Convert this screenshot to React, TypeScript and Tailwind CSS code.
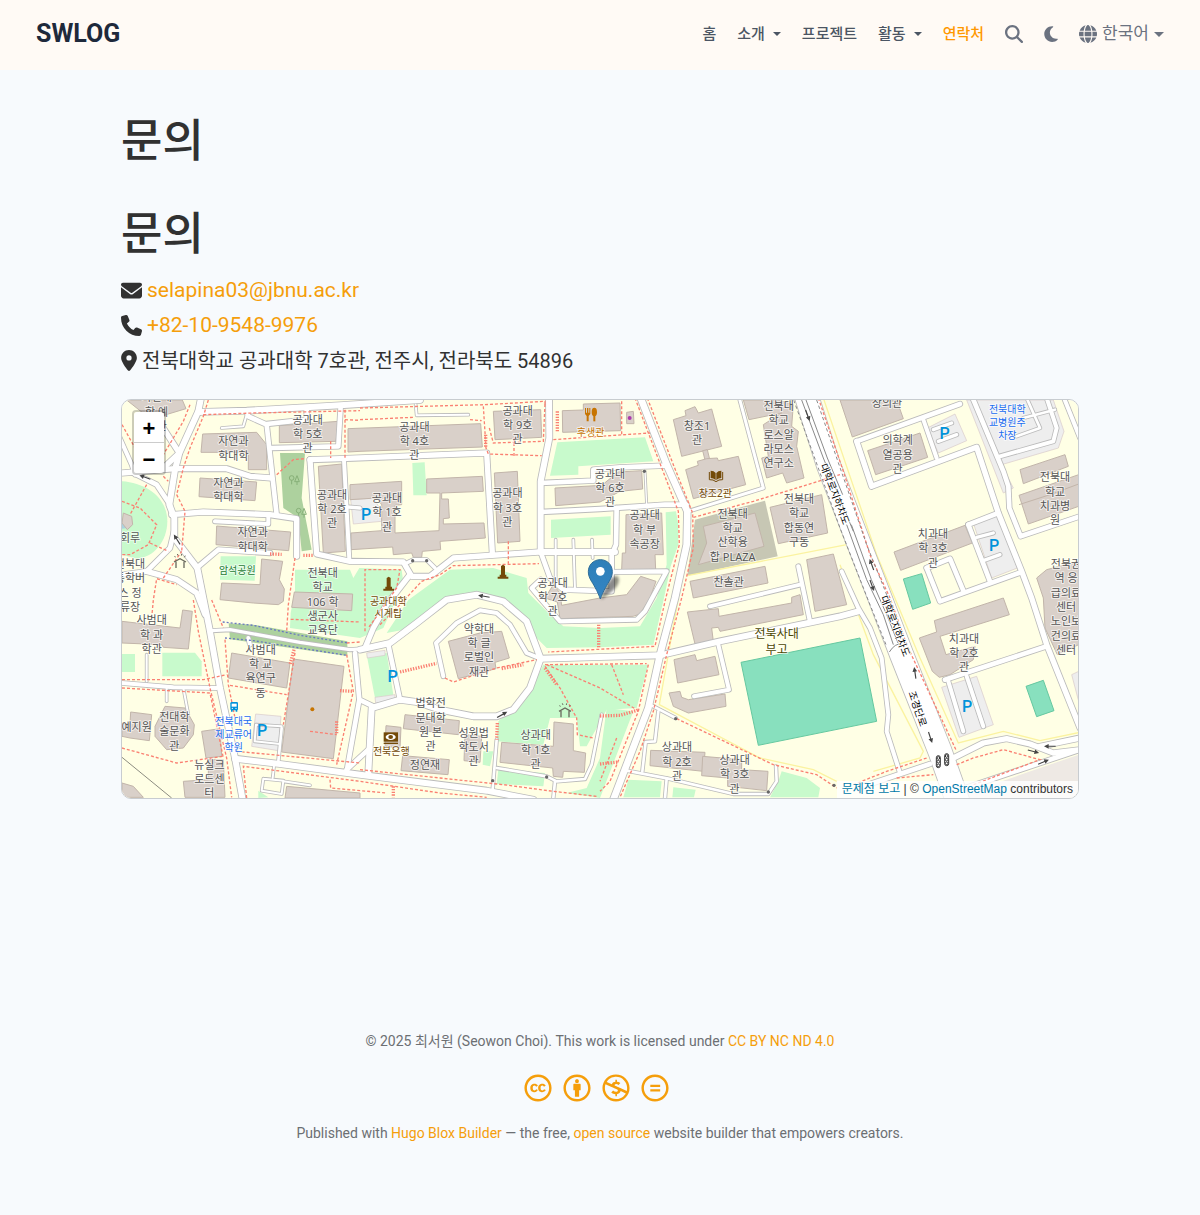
import type { ReactNode } from 'react';
import {
  FaCreativeCommons,
  FaCreativeCommonsBy,
  FaCreativeCommonsNc,
  FaCreativeCommonsNd,
  FaEnvelope,
  FaGlobe,
  FaLocationDot,
  FaMagnifyingGlass,
  FaMoon,
  FaPhone,
} from 'react-icons/fa6';

/* ---------- map data (three map units per screen pixel) ---------- */

const grass = [
  '525,515 690,515 700,540 718,510 845,515 850,555 790,690 720,720 510,690 512,645 525,580',
  '302,475 408,475 404,548 300,545',
  '6,768 45,768 45,822 6,822',
  '127,764 225,764 245,790 245,835 127,835',
  '877,195 914,193 920,292 880,292',
  '1312,133 1575,118 1600,190 1375,205 1375,230 1290,233',
  '1293,365 1472,355 1472,410 1293,420',
  '1637,343 1668,340 1675,380 1675,440 1652,505 1632,600 1600,740 1440,748 1280,750 1250,720 1200,640 1150,600 1070,590 985,605 880,690 800,705 865,606 990,515 1120,510 1220,540 1225,585 1280,640 1330,685 1440,690 1560,685 1610,600 1640,500',
  '1270,800 1585,800 1550,930 1460,935 1400,1045 1380,1045 1370,960 1290,960 1270,1040 1130,1030 1135,970 1230,880',
  '1540,940 1440,1200 1340,1185 1400,1170 1440,1080 1460,930',
  '1090,1060 1120,1060 1110,1105 1088,1100',
  '1135,1115 1275,1125 1270,1165 1130,1158',
  '1525,1145 1625,1150 1620,1198 1510,1198',
  '1660,1168 1727,1175 1722,1198 1657,1198',
  '1985,1120 2060,1140 2100,1170 2095,1198 1950,1198 1975,1150',
  '415,1178 445,1198 415,1200',
  '740,770 800,765 820,890 765,900',
];

const woods = [
  '480,165 555,165 545,300 575,455 545,460 535,360 490,330',
  '326,676 400,680 682,730 682,774 330,724',
];

const pitches = [
  '1863,793 2220,720 2270,970 1915,1042',
  '2350,543 2405,527 2432,615 2378,634',
  '2718,865 2770,847 2802,938 2750,956',
];

const parkings = [
  '692,305 760,300 785,340 785,370 700,378',
  '2422,90 2505,48 2540,128 2455,165',
  '2540,6 2800,6 2832,100 2815,150 2645,200 2680,270 2650,285',
  '2560,375 2635,350 2692,510 2615,540',
  '2465,868 2570,835 2620,980 2517,1018',
  '407,948 483,955 475,1058 395,1045',
  '740,765 795,757 795,772 742,780',
  '765,898 825,890 825,908 767,915',
  '2855,830 2876,820 2876,910',
];

const buildings = [
  '20,6 187,6 198,32 105,60 75,50',
  '248,108 410,103 440,140 440,215 385,215 385,163 243,163',
  '240,240 410,252 405,308 237,296',
  '290,384 512,402 506,458 288,440',
  '478,83 655,70 648,130 478,134',
  '595,205 665,198 676,460 610,465',
  '684,92 1082,77 1087,147 720,160 684,162',
  '425,483 488,490 478,545 493,573 490,610 475,620 400,615 300,605 305,555 420,560',
  '523,582 698,588 695,638 515,628',
  '690,260 845,250 845,320 825,322 825,405 957,398 960,285 920,285 920,243 1087,235 1090,280 965,285 965,303 985,303 988,360 970,362 970,378 1092,375 1096,420 960,430 962,455 907,460 905,478 880,478 875,465 820,470 818,447 693,455 693,405 785,398 785,320 770,300 690,305',
  '1120,40 1262,35 1265,118 1125,125',
  '1123,225 1192,220 1200,430 1133,435',
  '1327,38 1390,36 1390,18 1500,15 1502,98 1328,103',
  '1520,43 1540,40 1542,77 1520,77',
  '1305,270 1445,262 1495,222 1565,218 1568,273 1500,280 1440,312 1307,323',
  '1518,350 1625,345 1630,470 1605,470 1607,515 1505,515 1507,465 1517,465',
  '1300,560 1320,585 1325,622 1440,600 1520,590 1562,535 1608,550 1590,600 1560,648 1540,655 1320,662 1312,612 1275,600',
  '1660,65 1698,53 1695,38 1725,26 1735,45 1775,33 1805,145 1685,175',
  '1748,158 1762,155 1770,188 1756,190',
  '1697,215 1735,202 1732,190 1760,182 1792,180 1795,188 1855,175 1877,260 1720,302',
  '1870,6 1975,6 2020,20 2015,85 2035,100 2030,145 2052,240 2000,255 1988,225 1940,240 1925,180 1945,175 1930,80 1985,45 1887,65',
  '1950,328 2105,290 2123,405 1975,437',
  '1750,385 1905,345 1932,445 1735,500 1760,435',
  '1710,550 1935,505 1944,555 1720,600',
  '2060,485 2140,468 2180,620 2085,640',
  '2015,598 2040,590 2050,650 1800,700 1795,688 1775,690 1780,730 1725,738 1702,642 1795,632 1797,655 2015,615',
  '1662,785 1725,770 1730,788 1785,775 1797,830 1673,855',
  '1647,885 1680,880 1685,898 1705,905 1815,888 1818,925 1705,945 1660,925',
  '1592,1057 1755,1063 1750,1120 1590,1103',
  '1748,1075 1865,1085 1865,1115 1944,1120 1940,1178 1823,1165 1823,1140 1745,1133',
  '1145,1033 1300,1045 1302,972 1360,978 1360,1058 1397,1065 1393,1123 1330,1120 1328,1138 1300,1135 1298,1110 1140,1093',
  '985,730 1080,705 1145,700 1168,780 1125,793 1128,812 1015,842',
  '855,950 1018,968 1015,1010 850,992',
  '1035,1010 1085,1015 1080,1093 1032,1088',
  '848,1073 988,1085 984,1130 843,1118',
  '798,983 843,988 840,1050 795,1045',
  '6,670 180,690 188,636 217,640 205,753 130,748 125,740 6,735',
  '335,765 510,795 500,870 325,840',
  '520,783 672,805 640,1082 485,1062',
  '32,942 95,950 88,1028 30,1020 6,1015 6,975 30,978',
  '135,925 195,930 223,980 220,1010 190,1050 140,1055 105,1015 105,985',
  '245,1000 300,992 305,1075 258,1080',
  '265,1085 310,1085 315,1198 195,1198 190,1150 265,1145',
  '6,1155 40,1165 70,1198 6,1198',
  '500,1165 720,1185 720,1200 495,1200',
  '2160,6 2330,6 2350,62 2197,117',
  '2243,158 2400,105 2423,178 2267,230',
  '2700,215 2835,170 2845,205 2710,257',
  '2697,292 2876,230 2876,325 2725,378',
  '2322,462 2535,382 2557,435 2342,517',
  '2443,668 2650,600 2668,650 2460,715 2478,770 2565,745 2560,785 2490,830 2458,838 2437,820 2398,720 2450,702',
  '2750,540 2780,515 2876,490 2876,740 2812,770 2775,690 2770,600',
  '10,345 35,355 38,380 22,395 6,375',
];

const roads: [number, string][] = [
  [4, '1575,220 1580,320'],
  [6, '80,770 80,850'],
  [6, '140,870 140,910'],
  [6, '190,870 205,950'],
  [6, '380,50 370,85 305,90'],
  [6, '1307,425 1307,560'],
  [6, '1360,425 1365,575'],
  [6, '1416,425 1418,480'],
  [6, '887,20 890,52 1045,50'],
  [6, '408,980 485,985'],
  [6, '408,980 404,1030 480,1038'],
  [6, '462,1105 458,1140'],
  [6, '430,1142 490,1148 485,1188 425,1178 430,1142'],
  [6, '490,1150 570,1162'],
  [8, '1130,1025 1118,1175'],
  [8, '1130,1110 1280,1135 1310,1150 1395,1143 1415,1100 1445,950'],
  [8, '1305,1150 1300,1200'],
  [8, '1520,1118 1645,1142 1840,1188 1945,1188 1970,1150 1968,1105'],
  [8, '1640,1142 1635,1200'],
  [8, '1615,940 1605,1030 1577,1032 1567,1120'],
  [8, '1590,920 1667,960'],
  [8, '2720,0 2760,90 2690,115'],
  [8, '2710,60 2805,35'],
  [8, '485,990 475,1090'],
  [9, '1858,0 1930,270 1705,340'],
  [10, '2440,95 2495,75'],
  [10, '2455,130 2510,110'],
  [10, '2570,418 2620,405'],
  [10, '2590,488 2640,470'],
  [10, '660,325 720,330'],
  [12, '2832,0 2880,120'],
  [12, '285,370 445,378 445,358'],
  [12, '672,185 688,485'],
  [12, '6,855 160,868 290,870'],
  [12, '385,720 390,740'],
  [12, '970,835 948,735 1010,675 1080,637 1130,645 1170,680 1220,765 1262,782'],
  [12, '1795,740 1827,875 1722,895'],
  [12, '1770,625 2040,560'],
  [12, '2165,520 2215,630 2250,690 2285,780 2305,950 2300,1000 2340,1125'],
  [12, '2410,65 2450,180'],
  [12, '2640,175 2800,130 2810,90 2780,0'],
  [13, '2035,505 2070,670'],
  [13, '1475,522 1640,520 1575,640 1550,665 1320,670 1260,600 1235,570 1262,545'],
  [14, '1490,330 1488,440 1475,470 1475,580 1330,575 1290,540 1262,462'],
  [14, '1262,255 1420,248 1420,215 1500,208 1635,203'],
  [14, '1262,342 1440,333 1635,320 1700,320'],
  [14, '2420,510 2490,482 2530,578'],
  [14, '2420,510 2460,610 2705,522'],
  [14, '2475,845 2780,745'],
  [12, '2485,850 2530,1000'],
  [12, '2540,835 2590,985'],
  [14, '2545,380 2635,345'],
  [14, '2545,380 2610,550'],
  [14, '2558,0 2650,220 2665,265 2668,330 2702,415 2880,355'],
  [14, '2210,130 2520,18'],
  [14, '2230,1165 2430,1098'],
  [14, '230,510 295,455 450,465'],
  [10, '275,698 330,695 540,733 690,755 735,752 800,740'],
  [14, '805,740 840,905'],
  [14, '455,150 655,145 662,25'],
  [14, '440,78 560,65 560,30'],
  [14, '380,38 385,55 440,80 470,350'],
  [14, '718,905 680,1120'],
  [14, '705,765 718,905 760,925'],
  [14, '680,1115 750,1050'],
  [16, '6,225 165,212 320,212 390,235 455,240'],
  [12, '-5,110 35,200 45,230'],
  [14, '40,225 110,260 150,320'],
  [16, '110,60 178,165'],
  [16, '130,210 178,165'],
  [16, '155,350 250,342 450,350 530,362 530,475'],
  [16, '570,185 590,468 690,490 850,492 875,535 930,535 1000,480 1257,462'],
  [10, '860,495 880,485 920,485 945,510'],
  [16, '570,185 660,182 1100,165 1117,465'],
  [16, '870,530 800,620 760,690 735,750'],
  [14, '6,530 80,520 150,450 162,400'],
  [16, '80,520 170,545 230,585 255,650'],
  [16, '2210,130 2255,265 2570,148 2635,345 2705,520 2735,600 2780,740 2880,990'],
  [16, '2500,1080 2590,1035 2660,1022 2730,1038 2800,1065 2880,1055'],
  [16, '2760,1045 2880,1020'],
  [14, '2530,1172 2880,1055'],
  [18, '720,755 810,735 890,675 980,605 1070,590 1150,610 1220,670 1262,782 1230,870 1180,935 1130,955 1060,955 960,935 890,912 840,905 755,930 745,1125'],
  [18, '235,42 380,38 660,22 900,6'],
  [18, '345,1082 480,1098 720,1130 1100,1178 1240,1205'],
  [18, '1262,462 1485,462'],
  [18, '1287,0 1288,120 1262,250 1262,462'],
  [18, '1260,782 1440,777 1620,772 1800,730 2160,655 2215,640'],
  [18, '243,0 235,40 178,165 165,215 148,320 163,360 163,420 232,510 250,600 268,690 300,870 345,1080 368,1205'],
  [20, '1562,0 1640,200 1702,340 1700,440 1665,600 1620,770 1585,930 1480,1205'],
  [70, '2055,-20 2125,200 2280,600 2345,770 2460,1060 2515,1215'],
];

const footways = [
  '250,50 400,45 720,38',
  '265,6 250,55 210,150 190,210 170,290 195,340 185,460',
  '6,80 45,150',
  '210,20 190,70 130,170',
  '130,235 145,250',
  '470,230 520,185 555,182',
  '525,480 505,620 500,700',
  '675,35 675,180',
  '675,65 720,67',
  '632,130 632,180',
  '6,310 60,330 110,380 85,440 30,470 6,470',
  '80,260 30,350',
  '90,435 145,460',
  '130,540 185,460',
  '720,30 1095,20 1275,10 1275,25',
  '720,65 880,58',
  '1050,65 1085,68',
  '1108,90 1120,135 1270,130 1275,15',
  '1090,25 1098,150 1105,168 1265,173',
  '1182,120 1182,175',
  '1165,430 1165,497',
  '780,680 840,620 905,550 960,530 1000,503 1257,497',
  '735,700 735,515 840,515 830,570 745,690',
  '1300,125 1440,115 1590,105',
  '1505,10 1505,110',
  '1545,0 1610,170 1675,340 1678,440 1635,610 1605,745 1285,762',
  '1582,0 1660,200 1718,345 1720,450 1685,600 1640,770 1600,940 1560,1060 1500,1198',
  '1720,358 1900,310 2160,230',
  '220,606 235,700 270,870 320,1080 335,1198',
  '275,606 310,690',
  '315,725 325,860 345,960',
  '6,845 250,845 320,830',
  '6,870 270,885 310,1080',
  '330,862 500,890',
  '525,765 490,980',
  '512,664 720,672',
  '6,1050 170,1095 310,1075',
  '350,1060 720,1095',
  '680,735 720,732',
  '680,770 700,880 650,1100',
  '570,1000 650,1010',
  '380,1200 370,1105 720,1150 960,1185 1100,1198',
  '630,1145 632,1170 800,1185',
  '720,1115 960,1140 1150,1160 1300,1180 1430,1195',
  '95,660 100,606 110,542 170,560',
  '1275,800 1580,797',
  '1280,800 1440,870 1550,935',
  '1275,805 1320,870 1370,960 1372,1010 1420,1020',
  '975,840 1000,852 1130,810 1250,785',
  '1585,800 1555,940 1470,1150 1440,1180',
  '1475,800 1510,890',
  '1490,1020 1440,1150',
  '1670,962 1960,1100 2090,1130 2150,1170',
  '2095,0 2170,220 2250,470 2310,600 2360,740 2510,1060',
  '2200,1160 2300,1120 2420,1080',
  '2330,1140 2440,1130',
  '2510,1100 2560,1080 2650,1055 2760,1085 2560,1160',
];

const steps = [
  '450,468 485,469',
  '550,472 580,472',
  '840,822 950,796',
  '1145,812 1210,800',
  '522,755 510,800',
  '1132,975 1130,1025',
  '1436,680 1436,750',
  '1440,954 1500,952 1555,936',
  '1275,810 1310,860',
  '1440,1098 1495,1092',
  '650,970 650,1010',
  '660,878 700,880',
  '1097,110 1097,150',
  '1312,40 1312,100',
  '820,1165 820,1198',
];

const boundaries = [
  '1675,600 1618,920 1920,1080 2080,1115 2150,1150',
  '1702,533 2180,440',
  '2110,0 2270,470 2400,780 2515,1035 2650,1000 2760,1028 2876,1004',
  '2160,500 2260,770 2410,1060 2400,1080 2260,1120',
];

interface Label {
  x: number;
  y: number;
  lines: string[];
  size?: number;
  gap?: number;
  color?: string;
}

const BROWN = '#734a08';
const TRANSIT = '#1a6cf0';

const labels: Label[] = [
  { x: 110, y: -2, lines: ['자연대', '학 예', '술관'] },
  { x: 340, y: 130, lines: ['자연과', '학대학'] },
  { x: 325, y: 255, lines: ['자연과', '학대학'] },
  { x: 398, y: 403, lines: ['자연과', '학대학'] },
  { x: 563, y: 65, lines: ['공과대', '학 5호', '관'] },
  { x: 636, y: 290, lines: ['공과대', '학 2호', '관'] },
  { x: 608, y: 525, lines: ['전북대', '학교', '106 학', '생군사', '교육단'] },
  { x: 30, y: 420, lines: ['회루'] },
  { x: 30, y: 498, lines: ['전북대', '통학버', '스 정', '류장'] },
  { x: 352, y: 516, lines: ['암석공원'], size: 30, color: '#1e7b34' },
  { x: 95, y: 667, lines: ['사범대', '학 과', '학관'] },
  { x: 422, y: 755, lines: ['사범대', '학 교', '육연구', '동'] },
  { x: 50, y: 987, lines: ['예지원'] },
  { x: 163, y: 957, lines: ['전대학', '술문화', '관'] },
  { x: 268, y: 1100, lines: ['뉴실크', '로드센', '터'] },
  { x: 341, y: 968, lines: ['전북대국', '제교류어', '학원'], size: 30, gap: 39, color: TRANSIT },
  { x: 883, y: 86, lines: ['공과대', '학 4호', '관'] },
  { x: 1193, y: 38, lines: ['공과대', '학 9호', '관'] },
  { x: 801, y: 300, lines: ['공과대', '학 1호', '관'] },
  { x: 1162, y: 286, lines: ['공과대', '학 3호', '관'] },
  { x: 1298, y: 554, lines: ['공과대', '학 7호', '관'] },
  { x: 805, y: 608, lines: ['공과대학', '시계탑'], size: 30, gap: 38, color: BROWN },
  { x: 1412, y: 101, lines: ['후생관'], size: 30, color: '#c77400' },
  { x: 1470, y: 227, lines: ['공과대', '학 6호', '관'] },
  { x: 1574, y: 352, lines: ['공과대', '학 부', '속공장'] },
  { x: 1731, y: 84, lines: ['창조1', '관'] },
  { x: 1786, y: 286, lines: ['창조2관'], size: 30, color: BROWN },
  { x: 1976, y: 24, lines: ['전북대', '학교', '로스알', '라모스', '연구소'] },
  { x: 2037, y: 303, lines: ['전북대', '학교', '합동연', '구동'] },
  { x: 1838, y: 347, lines: ['전북대', '학교', '산학융', '합 PLAZA'] },
  { x: 1826, y: 553, lines: ['찬솔관'] },
  { x: 1970, y: 707, lines: ['전북사대', '부고'], size: 36, gap: 48, color: '#4c4700' },
  { x: 2301, y: 14, lines: ['창의관'] },
  { x: 2333, y: 127, lines: ['의학계', '열공용', '관'] },
  { x: 2662, y: 32, lines: ['전북대학', '교병원주', '차장'], size: 30, gap: 39, color: TRANSIT },
  { x: 2805, y: 238, lines: ['전북대', '학교', '치과병', '원'] },
  { x: 2439, y: 408, lines: ['치과대', '학 3호', '관'] },
  { x: 2532, y: 722, lines: ['치과대', '학 2호', '관'] },
  { x: 2838, y: 498, lines: ['전북권', '역 응', '급의료', '센터', '노인보', '건의료', '센터'] },
  { x: 1077, y: 692, lines: ['약학대', '학 글', '로벌인', '재관'] },
  { x: 932, y: 916, lines: ['법학전', '문대학', '원 본', '관'] },
  { x: 1061, y: 1004, lines: ['성원법', '학도서', '관'] },
  { x: 915, y: 1101, lines: ['정연재'] },
  { x: 1247, y: 1012, lines: ['상과대', '학 1호', '관'] },
  { x: 814, y: 1060, lines: ['전북은행'], size: 30, color: BROWN },
  { x: 1671, y: 1048, lines: ['상과대', '학 2호', '관'] },
  { x: 1844, y: 1086, lines: ['상과대', '학 3호', '관'] },
];

const roadNames: [number, number, number, string][] = [
  [2145, 288, 69, '대학로지하차도'],
  [2326, 684, 69, '대학로지하차도'],
  [2393, 932, 71, '조경단로'],
];

const parkingSigns: [number, number][] = [
  [738, 348],
  [2474, 107],
  [2622, 443],
  [2541, 924],
  [426, 998],
  [818, 835],
];

/* x, y, angle of each one-way arrow */
const arrows: [number, number, number][] = [
  [75, 238, 200],
  [171, 425, 238],
  [1092, 595, 190],
  [1146, 950, -28],
  [2063, 52, 70],
  [2255, 500, 250],
  [2256, 562, 70],
  [2385, 825, 262],
  [2431, 1018, 72],
  [2790, 1045, 180],
  [2740, 1060, 15],
  [2770, 1092, -22],
];

const dots: [number, number][] = [
  [878, 488],
  [920, 488],
  [1573, 220],
  [1667, 962],
  [1945, 1182],
  [2142, 1162],
  [1118, 1148],
  [1280, 1137],
];

/* ---------- map symbols ---------- */

function Monument({ x, y }: { x: number; y: number }) {
  return (
    <path
      transform={`translate(${x} ${y})`}
      fill={BROWN}
      d="M-6,-18 L0,-22 L6,-18 V8 H10 V14 H16 V20 H-16 V14 H-10 V8 H-6Z"
    />
  );
}

function Shelter({ x, y }: { x: number; y: number }) {
  return (
    <g transform={`translate(${x} ${y})`} fill="none" stroke="#6b6b5f" strokeWidth={4}>
      <path d="M-18,2 L0,-8 L18,2 M-12,1 V20 M12,1 V20" />
      <path d="M-14,-12 L-16,-16 M-6,-17 L-8,-22 M4,-17 L5,-22 M13,-12 L16,-17" strokeWidth={3} />
    </g>
  );
}

function Tree({ x, y }: { x: number; y: number }) {
  return (
    <g transform={`translate(${x} ${y})`} fill="none" stroke="#87b078" strokeWidth={3}>
      <circle cx={-7} cy={-5} r={7} />
      <path d="M-7,2 V14 M9,-12 L2,6 H16Z M9,6 V16" />
    </g>
  );
}

function Signal({ x, y }: { x: number; y: number }) {
  return (
    <g transform={`translate(${x} ${y})`} fill="#fff" stroke="#333" strokeWidth={3}>
      <rect x={-6} y={-18} width={12} height={36} rx={6} />
      <circle cy={-11} r={4} />
      <circle cy={0} r={4} />
      <circle cy={11} r={4} />
    </g>
  );
}

function Marker() {
  return (
    <g>
      <path
        d="M1443,602 C1450,580 1462,552 1480,536 C1500,526 1502,552 1486,570 C1474,584 1458,592 1446,604Z"
        fill="#000"
        opacity={0.45}
        filter="url(#shade)"
      />
      <path
        d="M1441,485 C1420,485 1405,501 1405,521 C1405,540 1417,552 1425,568 C1432,580 1437,592 1441,603 C1445,592 1450,580 1457,568 C1465,552 1477,540 1477,521 C1477,501 1462,485 1441,485Z"
        fill="url(#pin)"
        stroke="#2e6c97"
        strokeWidth={3}
      />
      <circle cx={1441} cy={520} r={13} fill="#fff" />
    </g>
  );
}

function CampusMap() {
  return (
    <svg
      viewBox="6 6 2868 1194"
      preserveAspectRatio="xMidYMid slice"
      className="block h-full w-full font-['Noto_Sans','Noto_Sans_CJK_KR',sans-serif]"
      role="img"
      aria-label="전북대학교 공과대학 지도"
    >
      <defs>
        <linearGradient id="pin" x1="0" y1="0" x2="0" y2="1">
          <stop offset="0" stopColor="#2e7fb8" />
          <stop offset="1" stopColor="#3485c4" />
        </linearGradient>
        <filter id="shade" x="-30%" y="-30%" width="160%" height="160%">
          <feGaussianBlur stdDeviation="5" />
        </filter>
      </defs>
      <rect width={2890} height={1220} fill="#ffffe5" />
      <polygon points="2876,1070 2500,1200 2876,1200" fill="#eee9e4" />
      <path d="M6,250 C80,255 142,300 142,370 C142,430 100,480 50,482 L6,470Z" fill="#c8facc" />
      {grass.map((p) => (
        <polygon key={p} points={p} fill="#c8facc" />
      ))}
      {woods.map((p) => (
        <polygon key={p} points={p} fill="#add19e" />
      ))}
      <Tree x={522} y={245} />
      <Tree x={543} y={343} />
      <polygon points="6,362 25,375 22,390 6,392" fill="#aad3df" />
      <polygon points="1725,365 1935,308 1973,475 1702,533" fill="#c7c7b4" />
      {parkings.map((p) => (
        <polygon key={p} points={p} fill="#eeeeee" stroke="#d8c8c8" strokeWidth={2} />
      ))}
      {pitches.map((p) => (
        <polygon key={p} points={p} fill="#88e0be" stroke="#66c8a0" strokeWidth={3} />
      ))}
      {boundaries.map((p) => (
        <polyline key={p} points={p} fill="none" stroke="#fbf3a0" strokeWidth={4} />
      ))}
      {buildings.map((p) => (
        <polygon key={p} points={p} fill="#d9d0c9" stroke="#c2b5aa" strokeWidth={3} />
      ))}
      <polyline points="2697,320 2790,290 2876,258" fill="none" stroke="#c2b5aa" strokeWidth={3} />
      <polyline points="6,1078 155,1200" fill="none" stroke="#8c8c80" strokeWidth={3} />
      <g fill="none" strokeLinejoin="round" strokeLinecap="round">
        {roads.map(([w, p]) => (
          <polyline key={p} points={p} stroke="#bbbbbb" strokeWidth={w + 5} />
        ))}
        {roads.map(([w, p]) => (
          <polyline key={p} points={p} stroke="#ffffff" strokeWidth={w} />
        ))}
      </g>
      <g fill="none" stroke="#fa8072" strokeWidth={4} strokeDasharray="9 6">
        {footways.map((p) => (
          <polyline key={p} points={p} />
        ))}
      </g>
      <g fill="none" stroke="#fa8072" strokeWidth={10} strokeDasharray="4 4">
        {steps.map((p) => (
          <polyline key={p} points={p} />
        ))}
      </g>
      <g fill="none" stroke="#6a78c0" strokeWidth={4} strokeDasharray="6 6">
        <polyline points="308,672 400,682 540,712 685,735" />
        <polyline points="315,720 400,728 540,750 680,772" />
      </g>
      <g fill="none" stroke="#8a8a8a" strokeWidth={3}>
        <polyline points="2045,6 2110,180 2155,290 2200,400" />
        <polyline points="2058,6 2122,180 2168,290" />
        <polyline points="2180,380 2240,545 2290,650 2320,740" />
        <polyline points="2194,380 2254,545 2300,650 2334,735" />
        <polyline points="2021,6 2160,390 2240,595 2300,745" strokeDasharray="10 8" />
        <polyline points="2090,6 2240,440 2330,665" strokeDasharray="10 8" />
        <path d="M2308,762 Q2325,735 2345,738" />
      </g>
      {arrows.map(([x, y, a]) => (
        <path
          key={`${x}-${y}`}
          transform={`translate(${x} ${y}) rotate(${a})`}
          d="M-17,-1.5 H4 V-7 L18,0 L4,7 V2 H-17Z"
          fill="#444"
        />
      ))}
      {dots.map(([x, y]) => (
        <circle key={`${x}-${y}`} cx={x} cy={y} r={5} fill="#666" />
      ))}
      <circle cx={577} cy={934} r={6} fill="#c77400" />
      <circle cx={1529} cy={60} r={6} fill="#ac39ac" />
      {labels.map(({ x, y, lines, size = 33, gap = 43, color = '#555555' }) => (
        <text
          key={`${x}-${y}`}
          fontSize={size}
          fill={color}
          stroke="#ffffff"
          strokeOpacity={0.65}
          strokeWidth={6}
          strokeLinejoin="round"
          paintOrder="stroke"
          textAnchor="middle"
        >
          {lines.map((line, i) => (
            <tspan key={line} x={x} y={y + 12 + i * gap}>
              {line}
            </tspan>
          ))}
        </text>
      ))}
      {roadNames.map(([x, y, a, name]) => (
        <text
          key={`${x}-${y}`}
          transform={`translate(${x} ${y}) rotate(${a})`}
          y={11}
          fontSize={30}
          fill="#000"
          stroke="#fff"
          strokeWidth={5}
          paintOrder="stroke"
          textAnchor="middle"
        >
          {name}
        </text>
      ))}
      {parkingSigns.map(([x, y]) => (
        <text
          key={`${x}-${y}`}
          x={x}
          y={y + 17}
          fontSize={48}
          fill="#0092da"
          textAnchor="middle"
          className="font-['Roboto',sans-serif] font-medium"
        >
          P
        </text>
      ))}
      <Monument x={806} y={558} />
      <Monument x={1149} y={522} />
      <Shelter x={180} y={490} />
      <Shelter x={1335} y={938} />
      <Signal x={2455} y={1091} />
      <Signal x={2480} y={1085} />
      <g fill="#c77400">
        <path d="M1395,30 h3 v14 h3 v-14 h4 v14 h3 v-14 h3 v18 l-5,6 v16 h-6 v-16 l-5,-6Z" />
        <ellipse cx={1423} cy={42} rx={8} ry={13} />
        <rect x={1420} y={50} width={6} height={20} />
      </g>
      <g fill={BROWN}>
        <path d="M1772,218 Q1782,218 1787,225 V246 Q1780,240 1772,240Z M1804,218 Q1794,218 1789,225 V246 Q1796,240 1804,240Z" />
        <path d="M1768,222 V245 Q1780,244 1788,251 Q1796,244 1808,245 V222" fill="none" stroke={BROWN} strokeWidth={3} />
        <rect x={791} y={1003} width={43} height={28} />
        <ellipse cx={812} cy={1017} rx={15} ry={9} fill="#fff" />
        <ellipse cx={812} cy={1017} rx={7} ry={6} />
        <rect x={791} y={1034} width={43} height={4} />
      </g>
      <g>
        <rect x={331} y={912} width={23} height={25} rx={4} fill="#0092da" />
        <rect x={335} y={917} width={15} height={9} fill="#fff" />
        <path d="M333,936 v5 h5 v-5Z M347,936 v5 h5 v-5Z" fill="#0092da" />
        <circle cx={337} cy={931} r={2} fill="#fff" />
        <circle cx={348} cy={931} r={2} fill="#fff" />
      </g>
      <Marker />
    </svg>
  );
}

/* ---------- page ---------- */

function Caret({ large = false }: { large?: boolean }) {
  return (
    <svg viewBox="0 0 10 5" aria-hidden="true" className={large ? 'h-[5px] w-[10px]' : 'h-1 w-2'}>
      <path d="M0 0H10L5 5Z" fill="currentColor" />
    </svg>
  );
}

function TextLink({ href, children }: { href: string; children: ReactNode }) {
  return (
    <a href={href} className="text-[#f59e0b] hover:underline">
      {children}
    </a>
  );
}

function Header() {
  return (
    <header className="flex h-[70px] items-center justify-between bg-[#fffaf5] px-9 pb-0.5">
      <a href="#home" className="text-[25px] font-bold text-[#1e293b]">
        SWLOG
      </a>
      <nav className="flex items-center gap-[21px] text-[15px] font-medium text-[#4b5563]">
        <a href="#home">홈</a>
        <button type="button" className="flex items-center gap-2">
          소개 <Caret />
        </button>
        <a href="#projects">프로젝트</a>
        <button type="button" className="flex items-center gap-2">
          활동 <Caret />
        </button>
        <a href="#contact" className="text-[#ff9800]">연락처</a>
        <button type="button" aria-label="검색" className="text-lg text-[#6b7280]">
          <FaMagnifyingGlass />
        </button>
        <button type="button" aria-label="화면 모드" className="text-[#6b7280]">
          <FaMoon className="h-[18px] w-[14px]" />
        </button>
        <button type="button" className="flex items-center gap-[5px] text-[17px] font-normal text-[#6b7280]">
          <FaGlobe className="text-lg" /> 한국어 <Caret large />
        </button>
      </nav>
    </header>
  );
}

export default function App() {
  return (
    <div className="flex min-h-screen flex-col bg-[#f7fafd] font-['Roboto','Noto_Sans_CJK_KR',sans-serif] text-[#313131]">
      <Header />
      <main className="mx-auto w-full max-w-[990px] grow px-4 pt-[45px]">
        <h1 className="text-[45px] leading-[54px] font-medium">문의</h1>
        <section>
          <h1 className="mt-[39px] text-[45px] leading-[54px] font-medium">문의</h1>
          <ul className="mt-[11px] text-xl">
            <li className="flex h-[35px] items-center gap-[5px] text-[21px]">
              <FaEnvelope />
              <TextLink href="mailto:selapina03@jbnu.ac.kr">selapina03@jbnu.ac.kr</TextLink>
            </li>
            <li className="flex h-[35px] items-center gap-[5px] text-[21px]">
              <FaPhone />
              <TextLink href="tel:+82-10-9548-9976">+82-10-9548-9976</TextLink>
            </li>
            <li className="flex h-[35px] items-center gap-[5px]">
              <FaLocationDot className="h-[21px] w-4" />
              <span>전북대학교 공과대학 7호관, 전주시, 전라북도 54896</span>
            </li>
          </ul>
          <div className="relative mt-[21px] h-[400px] overflow-hidden rounded-[10px] border border-[#c8ccd0]">
            <CampusMap />
            <div className="absolute top-2.5 left-2.5 flex flex-col rounded border-2 border-black/20 bg-clip-padding font-['Liberation_Sans',sans-serif] text-[22px] font-bold text-black">
              <button type="button" aria-label="확대" className="h-[31px] w-[30px] rounded-t-sm border-b border-[#ccc] bg-white leading-[34px]">
                +
              </button>
              <button type="button" aria-label="축소" className="h-[30px] w-[30px] rounded-b-sm bg-white leading-[34px]">
                −
              </button>
            </div>
            <div className="absolute right-0 bottom-0 bg-white/80 px-[5px] font-['Liberation_Sans','Noto_Sans_CJK_KR',sans-serif] text-xs leading-[17px] text-[#333]">
              <a href="#report" className="text-[#0078a8]">문제점 보고</a> | ©{' '}
              <a href="#osm" className="text-[#0078a8]">OpenStreetMap</a> contributors
            </div>
          </div>
        </section>
      </main>
      <footer className="px-4 pb-[71px] text-center text-sm leading-[21px] text-[#6c6f73]">
        <p>
          © 2025 최서원 (Seowon Choi). This work is licensed under <TextLink href="#license">CC BY NC ND 4.0</TextLink>
        </p>
        <a
          href="#license"
          aria-label="CC BY NC ND 4.0"
          className="mt-[22px] mr-2 flex justify-center gap-[11px] text-[28px] text-[#f59e0b]"
        >
          <FaCreativeCommons />
          <FaCreativeCommonsBy />
          <FaCreativeCommonsNc />
          <FaCreativeCommonsNd />
        </a>
        <p className="mt-[21px]">
          Published with <TextLink href="#hugo">Hugo Blox Builder</TextLink> — the free,{' '}
          <TextLink href="#source">open source</TextLink> website builder that empowers creators.
        </p>
      </footer>
    </div>
  );
}
